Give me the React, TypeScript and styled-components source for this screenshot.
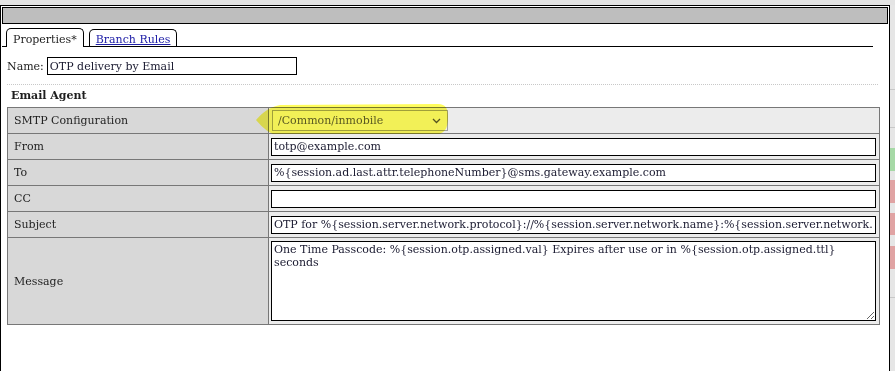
import React from "react";
import styled, { createGlobalStyle } from "styled-components";

const GlobalStyle = createGlobalStyle`
  html, body {
    margin: 0;
    padding: 0;
    background: #e4e4e4;
    font-family: "DejaVu Serif", "Liberation Serif", serif;
    font-size: 11px;
    color: #1e1e1e;
  }
`;

const Page = styled.div`
  display: flex;
  height: 371px;
  padding-top: 5px;
  box-sizing: border-box;
  overflow: hidden;
`;

const Dialog = styled.div`
  width: 890px;
  flex: none;
  box-sizing: border-box;
  border: 1px solid #000;
  border-bottom: none;
  background: #fff;
  padding: 1px;
  display: flex;
  flex-direction: column;
`;

const TitleBar = styled.div`
  height: 17px;
  box-sizing: border-box;
  background: #bebebe;
  border: 1px solid #000;
`;

const TabStrip = styled.div`
  display: flex;
  align-items: flex-end;
  gap: 5px;
  margin-top: 3px;
  margin-right: 15px;
  padding-left: 4px;
  height: 19px;
  border-bottom: 1px solid #000;
`;

const Tab = styled.div<{ $active?: boolean }>`
  height: ${(p) => (p.$active ? "19px" : "17px")};
  box-sizing: border-box;
  padding: 2px 6px 0 6px;
  display: flex;
  align-items: center;
  border: 1px solid #000;
  border-bottom: none;
  border-radius: 5px 5px 0 0;
  background: #fff;
  margin-bottom: ${(p) => (p.$active ? "-1px" : "0")};
  color: ${(p) => (p.$active ? "#1e1e1e" : "#2020a8")};
  text-decoration: ${(p) => (p.$active ? "none" : "underline")};
`;

const NameRow = styled.div`
  display: flex;
  align-items: center;
  gap: 3px;
  margin-top: 10px;
  padding-left: 5px;
`;

const TextBox = styled.input<{ $w: string }>`
  width: ${(p) => p.$w};
  height: 18px;
  box-sizing: border-box;
  border: 1px solid #000;
  outline: none;
  padding: 0 2px;
  font: inherit;
  color: #1a1a30;
  background: #fff;
`;

const Separator = styled.div`
  margin: 9px 10px 0 5px;
  border-top: 1px dotted #c8c8c8;
`;

const SectionTitle = styled.div`
  font-weight: bold;
  margin: 3px 0 0 9px;
  height: 16px;
  line-height: 16px;
`;

const Grid = styled.table`
  margin: 3px 0 0 5px;
  width: 873px;
  border-collapse: collapse;
  border: 1px solid #777;
  table-layout: fixed;
`;

const LabelCell = styled.td<{ $tall?: boolean }>`
  width: 254px;
  background: #d8d8d8;
  border: 1px solid #777;
  padding: 0 0 0 6px;
  height: ${(p) => (p.$tall ? "86px" : "25px")};
  color: #1e1e1e;
`;

const ValueCell = styled.td`
  background: #ececec;
  border: 1px solid #777;
  padding: 0 2px 0 2px;
  height: 25px;
  position: relative;
`;

const SelectBox = styled.div`
  width: 176px;
  height: 21px;
  box-sizing: border-box;
  margin-left: 1px;
  border: 1px solid #a0a0a0;
  background: #f2f2f2;
  color: #5a5a5a;
  display: flex;
  align-items: center;
  justify-content: space-between;
  padding: 0 6px 0 5px;
`;

const Highlight = styled.svg`
  position: absolute;
  left: -13px;
  top: -5px;
  mix-blend-mode: multiply;
  pointer-events: none;
`;

const MessageBox = styled.textarea`
  display: block;
  width: 605px;
  height: 80px;
  box-sizing: border-box;
  border: 1px solid #000;
  outline: none;
  padding: 1px 2px;
  font: inherit;
  color: #1a1a30;
  background: #fff;
  resize: both;
`;

const Backdrop = styled.div`
  flex: 1;
  display: flex;
  flex-direction: column;
  background: #e6e6e6;
  padding-top: 84px;
`;

const Stripe = styled.div<{ $h: number; $c: string; $gap?: number }>`
  height: ${(p) => p.$h}px;
  background: ${(p) => p.$c};
  margin-top: ${(p) => p.$gap ?? 0}px;
`;

const rows = [
  { label: "From", value: "totp@example.com" },
  { label: "To", value: "%{session.ad.last.attr.telephoneNumber}@sms.gateway.example.com" },
  { label: "CC", value: "" },
  {
    label: "Subject",
    value:
      "OTP for %{session.server.network.protocol}://%{session.server.network.name}:%{session.server.network.port}",
  },
];

export default function App() {
  return (
    <>
      <GlobalStyle />
      <Page>
        <Dialog>
          <TitleBar />
          <TabStrip>
            <Tab $active>Properties*</Tab>
            <Tab>Branch Rules</Tab>
          </TabStrip>
          <NameRow>
            <span>Name:</span>
            <TextBox $w="250px" defaultValue="OTP delivery by Email" />
          </NameRow>
          <Separator />
          <SectionTitle>Email Agent</SectionTitle>
          <Grid>
            <tbody>
              <tr>
                <LabelCell>SMTP Configuration</LabelCell>
                <ValueCell>
                  <SelectBox>
                    <span>/Common/inmobile</span>
                    <svg width="9" height="6" viewBox="0 0 9 6">
                      <path d="M1 1 L4.5 4.5 L8 1" fill="none" stroke="#555" strokeWidth="1.3" />
                    </svg>
                  </SelectBox>
                  <Highlight width="194" height="36" viewBox="0 0 194 36">
                    <path
                      d="M0 17 C6 10 13 4 24 2 L182 1 C190 1 192 6 192 14 C192 27 188 31 178 32 L26 33 C15 33 7 25 0 17 Z"
                      fill="#fffd5c"
                    />
                  </Highlight>
                </ValueCell>
              </tr>
              {rows.map((r) => (
                <tr key={r.label}>
                  <LabelCell>{r.label}</LabelCell>
                  <ValueCell>
                    <TextBox $w="605px" defaultValue={r.value} />
                  </ValueCell>
                </tr>
              ))}
              <tr>
                <LabelCell $tall>Message</LabelCell>
                <ValueCell>
                  <MessageBox defaultValue="One Time Passcode: %{session.otp.assigned.val} Expires after use or in %{session.otp.assigned.ttl} seconds" />
                </ValueCell>
              </tr>
            </tbody>
          </Grid>
        </Dialog>
        <Backdrop>
          <Stripe $h={1} $c="#c8c8c8" />
          <Stripe $h={1} $c="#c8c8c8" $gap={37} />
          <Stripe $h={23} $c="#a6d9a6" $gap={20} />
          <Stripe $h={23} $c="#e0a3a3" $gap={9} />
          <Stripe $h={22} $c="#e0a3a3" $gap={10} />
          <Stripe $h={23} $c="#e0a3a3" $gap={11} />
          <Stripe $h={1} $c="#c8c8c8" $gap={28} />
        </Backdrop>
      </Page>
    </>
  );
}
